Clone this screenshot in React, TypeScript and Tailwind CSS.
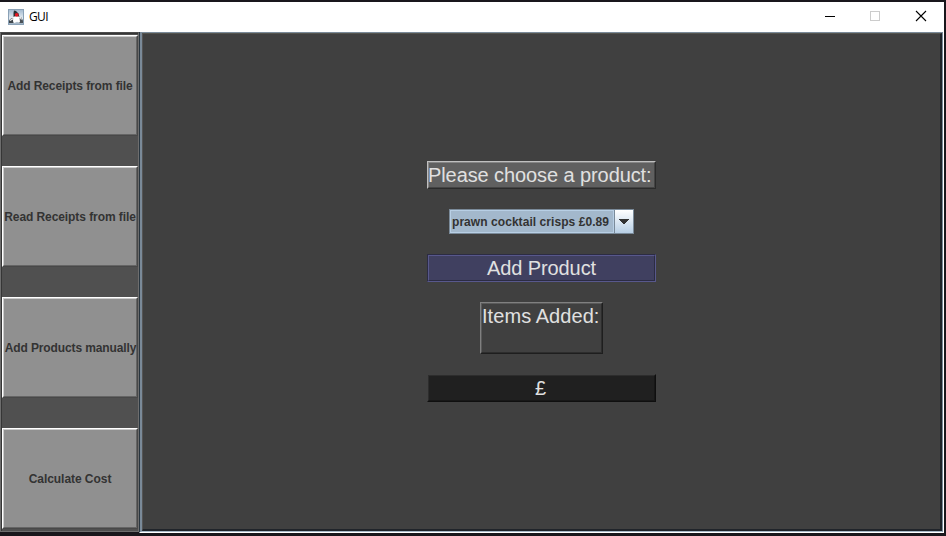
const sideButtons = [
  { label: "Add Receipts from file", tracking: "tracking-[-0.1px]" },
  { label: "Read Receipts from file", tracking: "tracking-[-0.08px]" },
  { label: "Add Products manually", tracking: "tracking-[-0.12px] pl-px" },
  { label: "Calculate Cost", tracking: "tracking-[-0.05px]" },
];

function DukeIcon() {
  return (
    <svg width="16" height="16" viewBox="0 0 16 16" className="ml-2 -mt-px shrink-0">
      <defs>
        <linearGradient id="tile" x1="0" y1="0" x2="0" y2="1">
          <stop offset="0" stopColor="#a5bbd0" />
          <stop offset="0.6" stopColor="#e6edf3" />
          <stop offset="1" stopColor="#9db0c1" />
        </linearGradient>
      </defs>
      <rect width="16" height="16" fill="#8aa1b6" />
      <rect x="1" y="1" width="14" height="14" fill="url(#tile)" />
      <path d="M6 1.5 L8 2 L10.5 4.5 L11.5 8 L5.5 8 L5.5 4 Z" fill="#2a3035" />
      <path d="M1 11.5 L3 9.5 L5.5 9 L5.5 14 L1 14 Z" fill="#3f464c" />
      <path d="M11 9 L13 8 L15 11.5 L15 14 L11 14 Z" fill="#4a5157" />
      <path d="M5.5 7.8 L8.5 7 L11.5 7.8 L12 13.5 L9 12.8 L6 14 L5 12 Z" fill="#fff" />
      <path d="M2 11.5 L5.5 9.5M12 8 L13.5 10.5" stroke="#f4f4f4" strokeWidth="1.2" />
      <circle cx="8.7" cy="5.8" r="1.9" fill="#e31824" />
    </svg>
  );
}

export default function App() {
  return (
    <div className="flex h-[536px] w-[946px] flex-col overflow-hidden bg-[#19171c] pr-[2px] pt-[2px] font-['Liberation_Sans',Arial,sans-serif]">
      <header className="flex h-[30px] shrink-0 items-center bg-white">
        <DukeIcon />
        <span className="ml-[5px] grow font-['Open_Sans','Noto_Sans',sans-serif] text-[12px] tracking-[-0.6px] text-black">
          GUI
        </span>
        <svg width="119" height="30" viewBox="0 0 119 30" fill="none" shapeRendering="crispEdges">
          <path d="M0 14.5h10" stroke="#000" />
          <path d="M45.5 9.5h9v9h-9z" stroke="#ccc" />
          <path d="M91 9l10 10M101 9l-10 10" stroke="#000" strokeWidth="1.1" shapeRendering="auto" />
        </svg>
      </header>

      <main className="flex h-[501px] shrink-0">
        <nav className="h-[500px] w-[139px] shrink-0 border border-[#6d6d6d] border-t-[#4c4c4c] bg-[#505050]">
          <div className="flex h-full flex-col gap-[30px] border border-b-0 border-r-0 border-[#363636] pt-px">
            {sideButtons.map(({ label, tracking }) => (
              <button
                key={label}
                className="h-[101px] w-[136px] shrink-0 border border-b-[#484848] border-l-white border-r-[#484848] border-t-white"
              >
                <span className="flex h-full items-center justify-center whitespace-nowrap border border-b-[#656565] border-l-[#cbcbcb] border-r-[#656565] border-t-[#cbcbcb] bg-[#909090] text-[12px] font-bold text-[#333]">
                  <span className={tracking}>{label}</span>
                </span>
              </button>
            ))}
          </div>
        </nav>

        <section className="flex grow border-b border-l border-r border-b-white border-l-[#293640] border-r-white">
          <div className="flex grow border border-l-2 border-[#7a8a99] border-b-[#a7b9c8] border-r-[#7a8a99]">
            <div className="flex grow flex-col items-center border border-b-2 border-r-2 border-b-[#20242a] border-l-[#555] border-r-[#20242a] border-t-[#55554f] bg-[#404040] pt-[127px] text-[20px] leading-[25px] text-[#e0e0e0]">
              <div className="h-[28px] w-[229px] border border-b-[#2b2b2b] border-l-[#c0c0c0] border-r-[#2b2b2b] border-t-[#c0c0c0]">
                <div className="h-full whitespace-nowrap border border-b-[#444] border-l-[#868686] border-r-[#444] border-t-[#868686] bg-[#606060]">
                  <span className="-ml-px tracking-[-0.09px]">Please choose a product:</span>
                </div>
              </div>

              <div className="mt-5 flex h-[25px] w-[185px] border border-[#7a8a99] text-[12px] font-bold text-[#333]">
                <div className="flex w-[164px] items-center whitespace-nowrap border border-[#b8cfe5] bg-[#a3b8cc] pl-px pt-px tracking-[0.06px]">
                  prawn cocktail crisps £0.89
                </div>
                <div className="flex grow items-center justify-center border-l border-[#7a8a99] bg-linear-to-b from-white to-[#b8cfe5]">
                  <svg width="10" height="5" viewBox="0 0 10 5" shapeRendering="crispEdges">
                    <path d="M0 0h10v1H9v1H8v1H7v1H6v1H4V4H3V3H2V2H1V1H0z" fill="#333" />
                  </svg>
                </div>
              </div>

              <button className="mt-5 h-[28px] w-[229px] border border-[#58588c] border-l-[#2c2c43] border-t-[#2c2c43]">
                <span className="block h-full border border-b-[#2c2c43] border-l-[#58588c] border-r-[#2c2c43] border-t-[#58588c] bg-[#404060] tracking-[-0.09px]">
                  Add Product
                </span>
              </button>

              <div className="mt-5 h-[52px] w-[123px] border border-b-[#1e1e1e] border-l-[#808080] border-r-[#1e1e1e] border-t-[#808080]">
                <div className="h-full whitespace-nowrap border border-b-[#2d2d2d] border-l-[#5a5a5a] border-r-[#2d2d2d] border-t-[#5a5a5a] tracking-[0.06px]">
                  Items Added:
                </div>
              </div>

              <div className="mt-5 h-[28px] w-[229px] border border-b-[#0f0f0f] border-l-[#404040] border-r-[#0f0f0f] border-t-[#404040]">
                <div className="h-full border border-b-[#171717] border-l-[#2d2d2d] border-r-[#171717] border-t-[#2d2d2d] bg-[#202020] pr-0.5 text-center">
                  £
                </div>
              </div>
            </div>
          </div>
        </section>
      </main>
    </div>
  );
}
